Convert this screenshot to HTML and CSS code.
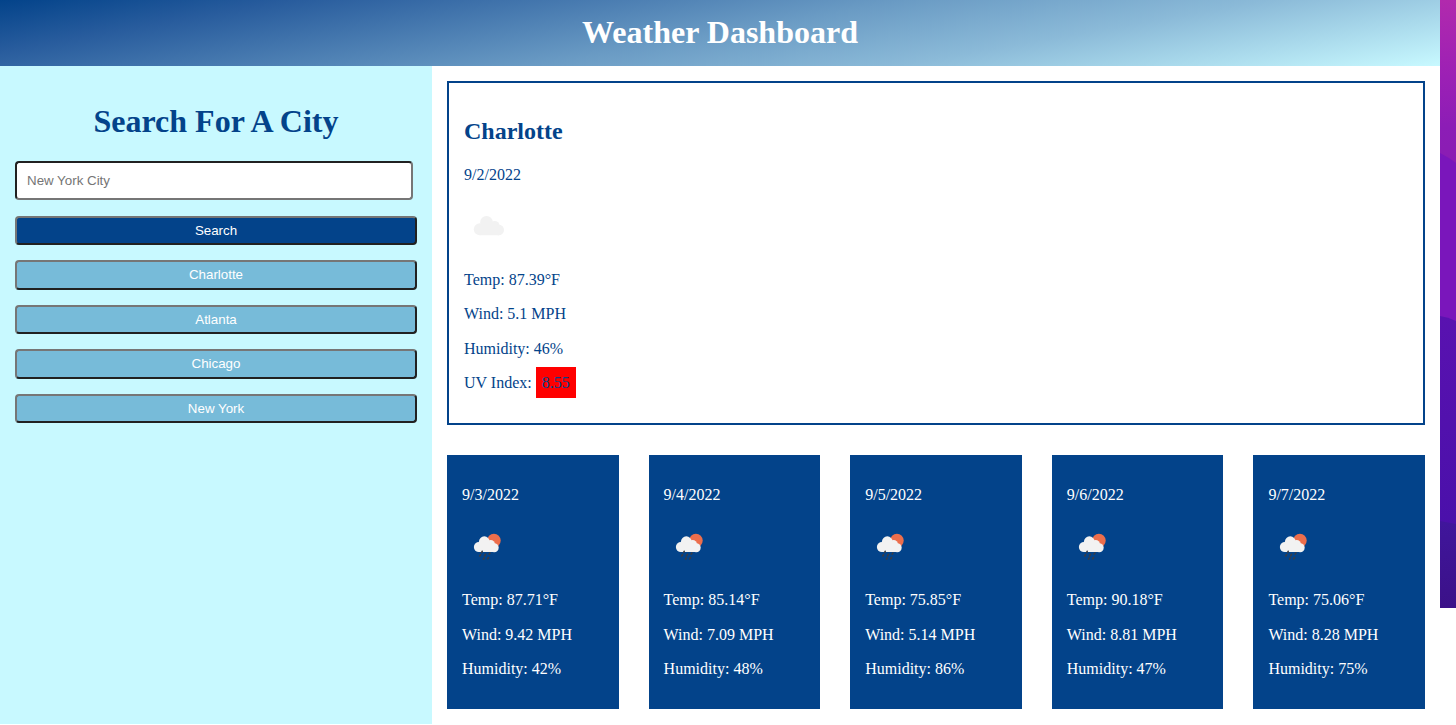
FILE: index.html
```html
<!DOCTYPE html>
<html lang="en">
<head>
<meta charset="utf-8">
<title>Weather Dashboard</title>
<link rel="stylesheet" href="styles.css">
</head>
<body>
<svg width="0" height="0" class="defs">
  <symbol id="cloud" viewBox="0 0 50 50">
    <g fill="#f2f2f2">
      <circle cx="22.500" cy="22.300" r="6.300"/>
      <circle cx="15.800" cy="29.200" r="6"/>
      <circle cx="30.700" cy="25.700" r="4.800"/>
      <circle cx="34.700" cy="29.900" r="5.300"/>
      <path d="M15.600 35.200h19.300V27L29 22H20l-5 5z"/>
    </g>
  </symbol>
  <symbol id="rain" viewBox="0 0 50 50">
    <circle cx="31.900" cy="19.600" r="6.800" fill="#ec6e4c"/>
    <g fill="#f2f2f2">
      <circle cx="22.300" cy="20.700" r="5.400"/>
      <circle cx="16.900" cy="26.100" r="5"/>
      <circle cx="28.700" cy="23.200" r="4.200"/>
      <circle cx="32.200" cy="26.700" r="4.500"/>
      <path d="M16.800 31.100h15.500V25L27 20H20l-5 5z"/>
    </g>
    <path stroke="#3a3c44" stroke-width="1.600" stroke-linecap="round" fill="none" d="M20.200 30.300l-.5 1.200M18.600 33.700l-.8 1.300M23.500 33.300l-.9 1.500M27.900 32l-.7 1.200M22.100 37l-.6 1.100M26.500 36.500l-.8 1.300"/>
  </symbol>
</svg>
<div class="page">
  <header class="header"><h1>Weather Dashboard</h1></header>
  <div class="content">
    <aside class="sidebar">
      <h1>Search For A City</h1>
      <input class="city-input" type="text" placeholder="New York City">
      <div class="buttons">
        <button class="btn search">Search</button>
        <button class="btn">Charlotte</button>
        <button class="btn">Atlanta</button>
        <button class="btn">Chicago</button>
        <button class="btn">New York</button>
      </div>
    </aside>
    <main class="main">
      <section class="current">
        <h2>Charlotte</h2>
        <p>9/2/2022</p>
        <div class="icon"><svg><use href="#cloud"/></svg></div>
        <p>Temp: 87.39°F</p>
        <p>Wind: 5.1 MPH</p>
        <p>Humidity: 46%</p>
        <p>UV Index: <span class="uv">8.55</span></p>
      </section>
      <section class="forecast">
        <article class="day"><p>9/3/2022</p><div class="icon"><svg><use href="#rain"/></svg></div><p>Temp: 87.71°F</p><p>Wind: 9.42 MPH</p><p>Humidity: 42%</p></article>
        <article class="day"><p>9/4/2022</p><div class="icon"><svg><use href="#rain"/></svg></div><p>Temp: 85.14°F</p><p>Wind: 7.09 MPH</p><p>Humidity: 48%</p></article>
        <article class="day"><p>9/5/2022</p><div class="icon"><svg><use href="#rain"/></svg></div><p>Temp: 75.85°F</p><p>Wind: 5.14 MPH</p><p>Humidity: 86%</p></article>
        <article class="day"><p>9/6/2022</p><div class="icon"><svg><use href="#rain"/></svg></div><p>Temp: 90.18°F</p><p>Wind: 8.81 MPH</p><p>Humidity: 47%</p></article>
        <article class="day"><p>9/7/2022</p><div class="icon"><svg><use href="#rain"/></svg></div><p>Temp: 75.06°F</p><p>Wind: 8.28 MPH</p><p>Humidity: 75%</p></article>
      </section>
    </main>
  </div>
</div>
<svg class="wallpaper" viewBox="0 0 16 608">
  <defs>
    <linearGradient id="g1" x2="0" y2="1"><stop offset="0" stop-color="#b12aad"/><stop offset=".45" stop-color="#9c20b5"/><stop offset=".75" stop-color="#8c1db6"/><stop offset="1" stop-color="#8a1db2"/></linearGradient>
    <linearGradient id="g2" x2="0" y2="1"><stop offset="0" stop-color="#5912b0"/><stop offset="1" stop-color="#4a10aa"/></linearGradient>
    <linearGradient id="g3" x2="0" y2="1"><stop offset="0" stop-color="#40169c"/><stop offset="1" stop-color="#3b1188"/></linearGradient>
  </defs>
  <path fill="url(#g1)" d="M0 0h16v170H0z"/>
  <path fill="#7a16bb" d="M0 153Q8 157 16 163V330H0z"/>
  <path fill="url(#g2)" d="M0 316Q8 317 16 321V530H0z"/>
  <path fill="url(#g3)" d="M0 521L16 524V608H0z"/>
</svg>
</body>
</html>
```
FILE: styles.css
```css
* { box-sizing: border-box; }
body {
  margin: 0;
  display: flex;
  align-items: flex-start;
  height: 725px;
  overflow: hidden;
  background: #fff;
  font: 16px/18.5px "Liberation Serif", "Times New Roman", serif;
}
.defs { position: absolute; }
.page { width: 1440px; }
.wallpaper { width: 16px; height: 608px; display: block; }
.header {
  height: 66px;
  padding: 14px 15px;
  color: #fff;
  text-align: center;
  background: linear-gradient(170deg, #03438a, #285c9d 16%, #6a9bc4 50%, #8bbad8 70%, #c8f9ff);
}
.header h1 { margin: 0; font-size: 32px; line-height: 36px; }
.content { display: flex; height: 658px; }
.sidebar { width: 432px; padding: 15px; background: #c8f9ff; }
.sidebar h1 {
  margin: 21px 0 21px;
  color: #03438a;
  font-size: 32px;
  line-height: 38px;
  text-align: center;
}
.city-input {
  display: block;
  width: 398px;
  height: 39px;
  padding: 10px;
  border: 2px inset #767676;
  border-radius: 4px;
  background: #fff;
  font: 13.333px "Liberation Sans", Arial, sans-serif;
}
.city-input::placeholder { color: #757575; }
.buttons { display: grid; gap: 15px; margin-top: 15.5px; }
.btn {
  height: 29.5px;
  padding: 0;
  border: 2px outset #767676;
  border-radius: 4px;
  background: #77bbd9;
  color: #fff;
  font: 13.333px "Liberation Sans", Arial, sans-serif;
}
.search { background: #03438a; }
.main { flex: 1; padding: 15px; }
.current {
  height: 344px;
  padding: 15px;
  border: 2px solid #03438a;
  color: #03438a;
}
.current h2 { margin: 20px 0; font-size: 24px; line-height: 27.5px; }
p { margin: 16px 0; }
.icon { height: 54.5px; }
.icon svg { width: 50px; height: 50px; display: block; }
.uv { padding: 7px 6px; background: #f00; }
.forecast {
  display: grid;
  grid-template-columns: repeat(5, 1fr);
  gap: 30px;
  margin-top: 30px;
}
.day { height: 254px; padding: 15px; background: #03438a; color: #fff; }
```
